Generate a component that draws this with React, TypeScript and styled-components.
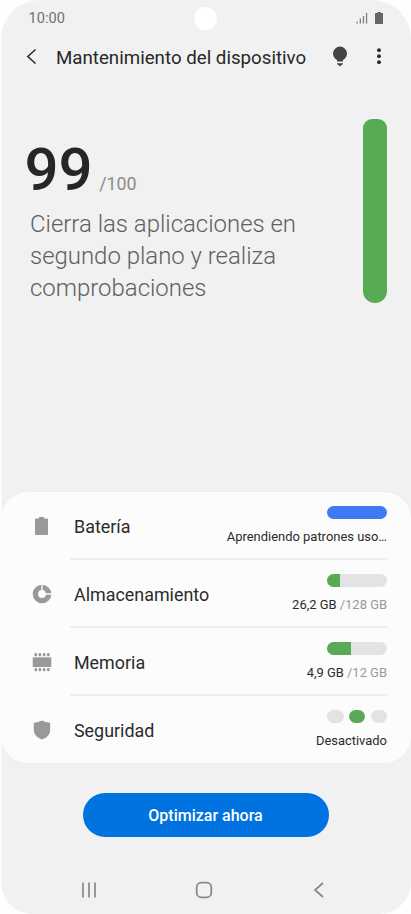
import React from 'react';
import styled, { createGlobalStyle } from 'styled-components';

const GlobalStyle = createGlobalStyle`
  * { box-sizing: border-box; }
  body { margin: 0; background: #fefefe; font-family: Roboto, sans-serif; }
`;

const Screen = styled.main`
  width: 410px;
  height: 914px;
  margin-left: 1px;
  padding-left: 1px;
  display: flex;
  flex-direction: column;
  background: linear-gradient(90deg, #f6f6f6 1px, #f1f1f1 1px);
  border-radius: 39px 39px 32px 32px;
  overflow: hidden;
`;

const StatusBar = styled.div`
  height: 36px;
  flex: none;
  display: flex;
  align-items: center;
  padding: 0 28px 0 26.500px;
`;

const Clock = styled.span`
  width: 165.500px;
  font-size: 14.600px;
  line-height: 18px;
  color: #707070;
`;

const Camera = styled.span`
  width: 23px;
  height: 23px;
  border-radius: 50%;
  background: #fff;
`;

const StatusIcons = styled.div`
  flex: 1;
  display: flex;
  justify-content: flex-end;
  align-items: center;
  gap: 7px;
`;

const Header = styled.header`
  height: 42px;
  flex: none;
  display: flex;
  align-items: center;
  padding: 0 29px 0 23px;
`;

const Title = styled.h1`
  margin: 1px 0 0 18px;
  width: 271px;
  font-size: 18.720px;
  line-height: 24px;
  font-weight: 400;
  color: #282828;
  white-space: nowrap;
`;

const MenuIcon = styled.svg`
  margin-left: auto;
`;

const Summary = styled.section`
  height: 413px;
  flex: none;
  display: flex;
  justify-content: space-between;
  align-items: flex-start;
  padding: 41px 24px 0 22.500px;
`;

const Copy = styled.div`
  padding-top: 15px;
`;

const Score = styled.div`
  display: flex;
  align-items: baseline;
  height: 74px;
`;

const ScoreValue = styled.strong`
  font-size: 60px;
  line-height: 72px;
  font-weight: 500;
  color: #262626;
`;

const ScoreTotal = styled.span`
  margin-left: 6.500px;
  font-size: 17.800px;
  color: #8a8a8a;
`;

const Message = styled.p`
  margin: 0 0 0 5.500px;
  font-size: 23.950px;
  line-height: 32px;
  font-weight: 300;
  color: #606060;
  white-space: nowrap;
`;

const ScoreBar = styled.div`
  width: 24px;
  height: 184px;
  border-radius: 9px 9px 12px 12px;
  background: #58ab54;
`;

const Card = styled.section`
  width: 410px;
  height: 271.500px;
  margin: 0.500px 0 0 -1px;
  padding-top: 0.500px;
  flex: none;
  border-radius: 26px;
  background: #fcfcfc;
  box-shadow: 0 0 1px #d8d8d8;
`;

const Row = styled.div`
  height: 68px;
  display: flex;
  padding-left: 29.500px;
  padding-right: 24px;
`;

const IconSlot = styled.span`
  width: 22px;
  display: flex;
  align-items: center;
  justify-content: center;
  margin-right: 17px;
`;

const RowBody = styled.div<{ $line: boolean }>`
  flex: 1;
  display: flex;
  justify-content: space-between;
  padding-left: 4.500px;
  border-bottom: ${(p) => (p.$line ? '2px solid #eeeeee' : '0')};
`;

const Label = styled.span`
  padding-top: 24px;
  font-size: 17.900px;
  line-height: 22px;
  color: #2b2b2b;
`;

const Status = styled.div`
  display: flex;
  flex-direction: column;
  align-items: flex-end;
  padding-top: 14px;
`;

const Meter = styled.div`
  width: 60px;
  height: 12.500px;
  border-radius: 6.500px;
  overflow: hidden;
  background: #e3e3e3;
`;

const Fill = styled.div<{ $width: number; $color: string }>`
  width: ${(p) => p.$width}px;
  height: 100%;
  background: ${(p) => p.$color};
`;

const Pills = styled.div`
  width: 60px;
  height: 12.500px;
  display: flex;
  justify-content: space-between;
`;

const Pill = styled.span<{ $active?: boolean }>`
  width: 16.500px;
  height: 12.500px;
  border-radius: 6.500px;
  background: ${(p) => (p.$active ? '#58ab54' : '#e3e3e3')};
`;

const Detail = styled.span`
  margin-top: 9px;
  font-size: 12.950px;
  line-height: 18px;
  color: #2b2b2b;
  white-space: nowrap;
`;

const Muted = styled.span`
  color: #999;
`;

const OptimizeButton = styled.button`
  width: 246px;
  height: 44px;
  flex: none;
  margin: 30px 0 0 80.500px;
  padding: 2px 0 0;
  border: 0;
  border-radius: 22px;
  background: #0073e0;
  color: #fff;
  font: 500 16px/20px Roboto, sans-serif;
`;

const NavBar = styled.nav`
  height: 77px;
  flex: none;
  display: flex;
  align-items: center;
  padding: 29px 0 0 78px;
`;

const HomeIcon = styled.svg`
  margin: 0 100px 0 97px;
`;

const BatteryIcon = ({ width, height, color }: { width: number; height: number; color: string }) => (
  <svg width={width} height={height} viewBox="0 0 13 18" preserveAspectRatio="none" fill={color}>
    <path d="M4 0h5v1.600h3q1 0 1 1V17q0 1-1 1H1q-1 0-1-1V2.600q0-1 1-1h3z" />
  </svg>
);

const StorageIcon = () => (
  <svg width="20" height="20" viewBox="0 0 20 20" fill="none">
    <circle cx="10" cy="10" r="6.600" stroke="#999" strokeWidth="5.400" />
    <path d="M10 0v7M13 10h7" stroke="#fcfcfc" strokeWidth="1.300" />
  </svg>
);

const MemoryIcon = () => (
  <svg width="20" height="20" viewBox="0 0 20 20" fill="#999">
    <path d="M.7 5.300h18.600v9.700H.7z" />
    {[2.5, 6.6, 10.8, 15].map((x) => (
      <React.Fragment key={x}>
        <rect x={x} y="1" width="2.600" height="3.200" rx=".9" />
        <rect x={x} y="16" width="2.600" height="3.200" rx=".9" />
      </React.Fragment>
    ))}
  </svg>
);

const ShieldIcon = () => (
  <svg width="20" height="20" viewBox="0 0 20 20" fill="#999">
    <path d="M10 .4Q13.800 2.200 18.200 2.700V10c0 4.400-3.400 7.800-8.200 9.600C5.200 17.800 1.800 14.400 1.800 10V2.700Q6.200 2.200 10 .4z" />
  </svg>
);

const rows = [
  {
    label: 'Batería',
    icon: <BatteryIcon width={13} height={18} color="#999" />,
    visual: <Meter><Fill $width={60} $color="#4079f4" /></Meter>,
    detail: 'Aprendiendo patrones uso…',
  },
  {
    label: 'Almacenamiento',
    icon: <StorageIcon />,
    visual: <Meter><Fill $width={13} $color="#58ab54" /></Meter>,
    detail: <>26,2 GB <Muted>/128 GB</Muted></>,
  },
  {
    label: 'Memoria',
    icon: <MemoryIcon />,
    visual: <Meter><Fill $width={24} $color="#58ab54" /></Meter>,
    detail: <>4,9 GB <Muted>/12 GB</Muted></>,
  },
  {
    label: 'Seguridad',
    icon: <ShieldIcon />,
    visual: <Pills><Pill /><Pill $active /><Pill /></Pills>,
    detail: 'Desactivado',
  },
];

export default function App() {
  return (
    <>
      <GlobalStyle />
      <Screen>
        <StatusBar>
          <Clock>10:00</Clock>
          <Camera />
          <StatusIcons>
            <svg width="12" height="12" viewBox="0 0 12 12" fill="#808080">
              <path d="M.5 9.500h1.300V11.500H.5zM3.700 6.500H5v5H3.700zM6.800 4h1.300v7.500H6.800zM9.900.8h1.300v10.700H9.900z" />
            </svg>
            <BatteryIcon width={8.5} height={12.5} color="#666" />
          </StatusIcons>
        </StatusBar>
        <Header>
          <svg width="13" height="18" viewBox="0 0 13 18" fill="none" stroke="#282828" strokeWidth="1.500">
            <path d="M10.500 1.500 2.800 8.500l7.700 7" />
          </svg>
          <Title>Mantenimiento del dispositivo</Title>
          <svg width="26" height="24" viewBox="0 0 26 24" fill="#444">
            <path d="M13 1.600a7 7 0 0 0-7 7c0 3 1.500 5 4 6.400V16.500h6v-1.500c2.500-1.400 4-3.400 4-6.400a7 7 0 0 0-7-7zM10 18.200h6c0 1-.6 1.600-1.500 1.600-.3 1-.7 1.400-1.500 1.400s-1.200-.4-1.500-1.400c-.9 0-1.500-.6-1.500-1.600z" />
          </svg>
          <MenuIcon width="6" height="20" viewBox="0 0 6 20" fill="#282828">
            <circle cx="3" cy="3.200" r="1.900" />
            <circle cx="3" cy="9.200" r="1.900" />
            <circle cx="3" cy="15.200" r="1.900" />
          </MenuIcon>
        </Header>
        <Summary>
          <Copy>
            <Score>
              <ScoreValue>99</ScoreValue>
              <ScoreTotal>/100</ScoreTotal>
            </Score>
            <Message>
              Cierra las aplicaciones en<br />
              segundo plano y realiza<br />
              comprobaciones
            </Message>
          </Copy>
          <ScoreBar />
        </Summary>
        <Card>
          {rows.map((row, i) => (
            <Row key={row.label}>
              <IconSlot>{row.icon}</IconSlot>
              <RowBody $line={i < rows.length - 1}>
                <Label>{row.label}</Label>
                <Status>
                  {row.visual}
                  <Detail>{row.detail}</Detail>
                </Status>
              </RowBody>
            </Row>
          ))}
        </Card>
        <OptimizeButton>Optimizar ahora</OptimizeButton>
        <NavBar>
          <svg width="18" height="18" viewBox="0 0 18 18" fill="none" stroke="#898989" strokeWidth="1.700">
            <path d="M3 1.500v15M9 1.500v15M15 1.500v15" />
          </svg>
          <HomeIcon width="18" height="18" viewBox="0 0 18 18" fill="none" stroke="#898989" strokeWidth="1.800">
            <rect x="1.700" y="1.700" width="14.600" height="14.600" rx="4.500" />
          </HomeIcon>
          <svg width="12" height="18" viewBox="0 0 12 18" fill="none" stroke="#898989" strokeWidth="1.700">
            <path d="M10 2 2 9l8 7" />
          </svg>
        </NavBar>
      </Screen>
    </>
  );
}
